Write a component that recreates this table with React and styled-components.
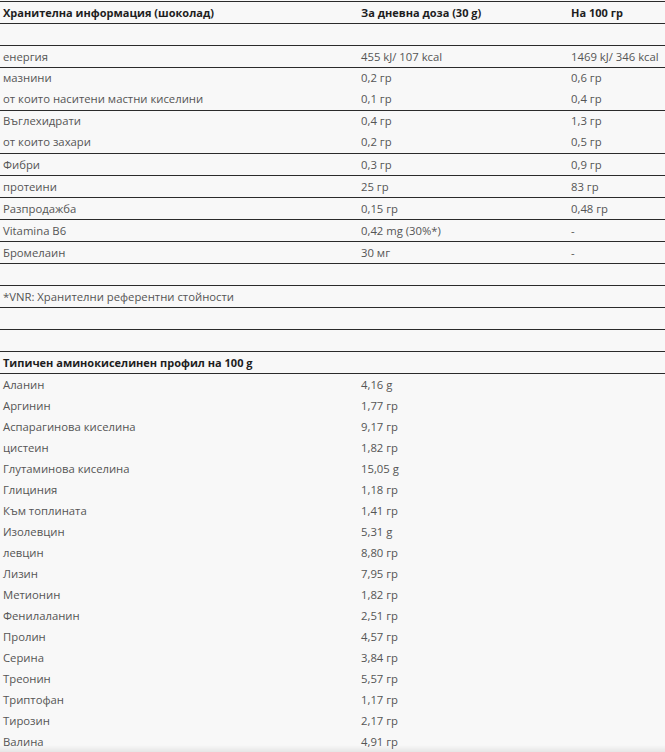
import React from "react";
import styled, { createGlobalStyle } from "styled-components";

const GlobalStyle = createGlobalStyle`
  html, body {
    margin: 0;
    padding: 0;
    background: #f8f8f8;
  }
  body {
    font-family: "Open Sans", "Noto Sans", sans-serif;
    font-size: 11.3px;
    color: #555555;
  }
`;

const Page = styled.div`
  padding-top: 1px;
  width: 665px;
`;

const Table = styled.table`
  width: 665px;
  border-collapse: collapse;
  table-layout: fixed;
  border-top: 1px solid #2b2b2b;
`;

const Row = styled.tr`
  height: ${(props) => (props.$line ? "22px" : "21px")};
  border-bottom: ${(props) => (props.$line ? "1px solid #2b2b2b" : "none")};
`;

const Cell = styled.td`
  padding: 0 0 0 3px;
  vertical-align: middle;
  white-space: nowrap;
  line-height: 20px;
  font-weight: ${(props) => (props.$bold ? 700 : 400)};
  font-size: ${(props) => (props.$bold ? "11px" : "11.3px")};
  color: ${(props) => (props.$bold ? "#1e1e1e" : "#555555")};
`;

const ColName = styled.col`
  width: 358px;
`;

const ColDose = styled.col`
  width: 210px;
`;

const ColHundred = styled.col`
  width: 97px;
`;

const AminoTable = styled.table`
  width: 665px;
  border-collapse: collapse;
  table-layout: fixed;
`;

const BottomShade = styled.div`
  position: fixed;
  left: 0;
  right: 0;
  bottom: 0;
  height: 7px;
  background: linear-gradient(rgba(0, 0, 0, 0), rgba(0, 0, 0, 0.07));
  pointer-events: none;
`;

const nutrition = [
  { name: "енергия", dose: "455 kJ/ 107 kcal", per100: "1469 kJ/ 346 kcal", line: true },
  { name: "мазнини", dose: "0,2 гр", per100: "0,6 гр" },
  { name: "от които наситени мастни киселини", dose: "0,1 гр", per100: "0,4 гр", line: true },
  { name: "Въглехидрати", dose: "0,4 гр", per100: "1,3 гр" },
  { name: "от които захари", dose: "0,2 гр", per100: "0,5 гр", line: true },
  { name: "Фибри", dose: "0,3 гр", per100: "0,9 гр", line: true },
  { name: "протеини", dose: "25 гр", per100: "83 гр", line: true },
  { name: "Разпродажба", dose: "0,15 гр", per100: "0,48 гр", line: true },
  { name: "Vitamina B6", dose: "0,42 mg (30%*)", per100: "-", line: true },
  { name: "Бромелаин", dose: "30 мг", per100: "-", line: true },
];

const aminos = [
  ["Аланин", "4,16 g"],
  ["Аргинин", "1,77 гр"],
  ["Аспарагинова киселина", "9,17 гр"],
  ["цистеин", "1,82 гр"],
  ["Глутаминова киселина", "15,05 g"],
  ["Глициния", "1,18 гр"],
  ["Към топлината", "1,41 гр"],
  ["Изолевцин", "5,31 g"],
  ["левцин", "8,80 гр"],
  ["Лизин", "7,95 гр"],
  ["Метионин", "1,82 гр"],
  ["Фенилаланин", "2,51 гр"],
  ["Пролин", "4,57 гр"],
  ["Серина", "3,84 гр"],
  ["Треонин", "5,57 гр"],
  ["Триптофан", "1,17 гр"],
  ["Тирозин", "2,17 гр"],
  ["Валина", "4,91 гр"],
];

export default function App() {
  return (
    <Page>
      <GlobalStyle />
      <Table>
        <colgroup>
          <ColName />
          <ColDose />
          <ColHundred />
        </colgroup>
        <tbody>
          <Row $line>
            <Cell $bold>Хранителна информация (шоколад)</Cell>
            <Cell $bold>За дневна доза (30 g)</Cell>
            <Cell $bold>На 100 гр</Cell>
          </Row>
          <Row $line>
            <Cell />
            <Cell />
            <Cell />
          </Row>
          {nutrition.map((item) => (
            <Row key={item.name} $line={item.line}>
              <Cell>{item.name}</Cell>
              <Cell>{item.dose}</Cell>
              <Cell>{item.per100}</Cell>
            </Row>
          ))}
          <Row $line>
            <Cell />
            <Cell />
            <Cell />
          </Row>
          <Row $line>
            <Cell colSpan={3}>*VNR: Хранителни референтни стойности</Cell>
          </Row>
          <Row $line>
            <Cell colSpan={3} />
          </Row>
          <Row $line>
            <Cell colSpan={3} />
          </Row>
          <Row $line>
            <Cell $bold colSpan={3}>Типичен аминокиселинен профил на 100 g</Cell>
          </Row>
        </tbody>
      </Table>
      <AminoTable>
        <colgroup>
          <ColName />
          <col />
        </colgroup>
        <tbody>
          {aminos.map(([name, value]) => (
            <Row key={name}>
              <Cell>{name}</Cell>
              <Cell>{value}</Cell>
            </Row>
          ))}
        </tbody>
      </AminoTable>
      <BottomShade />
    </Page>
  );
}
